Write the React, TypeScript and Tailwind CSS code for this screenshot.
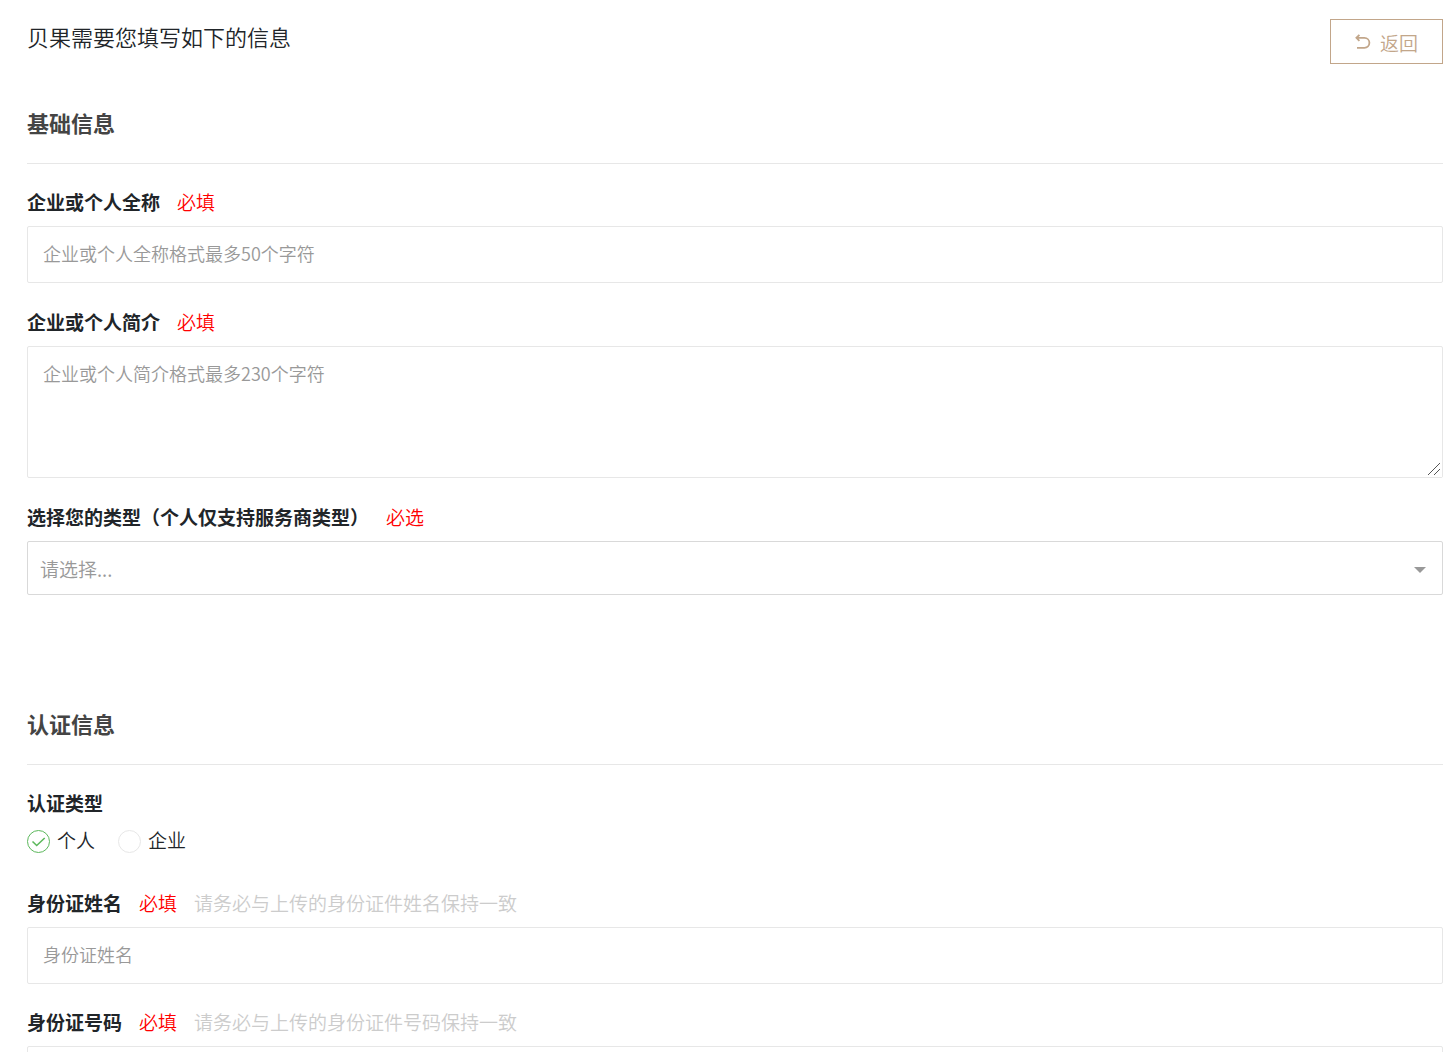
import React, { useState } from 'react';

interface FieldLabelProps {
  htmlFor: string;
  text: string;
  required?: string;
  hint?: string;
}

const inputClass =
  'block w-full rounded-xs border border-[#e7e7e7] bg-white px-[15px] text-[18px] leading-[27px] text-[#212529] placeholder:text-[#999] focus:outline-none focus:border-[#c2a68a]';

const FieldLabel: React.FC<FieldLabelProps> = ({ htmlFor, text, required, hint }) => (
  <div className="mb-3 flex items-center gap-[17px] text-[19px] leading-6">
    <label htmlFor={htmlFor} className="font-bold">{text}</label>
    {required && <span className="text-[#ff0000]">{required}</span>}
    {hint && <span className="text-[#ccc]">{hint}</span>}
  </div>
);

const SectionTitle: React.FC<{ children: React.ReactNode }> = ({ children }) => (
  <h2 className="mb-[26px] border-b border-[#e7e7e7] pb-[26px] text-[22px] leading-[30px] font-bold text-[#444]">
    {children}
  </h2>
);

const BackIcon: React.FC = () => (
  <svg className="h-4 w-4" viewBox="0 0 16 16" fill="none" stroke="currentColor" strokeWidth="1.8" aria-hidden="true">
    <path d="M4.4 0.8 1.4 3.8l3 3M1.4 3.8h8a5 5 0 0 1 0 10H2" />
  </svg>
);

const RadioOption: React.FC<{ value: string; label: string; checked: boolean; onChange: (value: string) => void }> = ({
  value,
  label,
  checked,
  onChange
}) => (
  <label className="flex cursor-pointer items-center gap-[7px]">
    <span className="relative flex h-[23px] w-[23px]">
      <input
        type="radio"
        name="authType"
        value={value}
        checked={checked}
        onChange={() => onChange(value)}
        className="h-full w-full appearance-none rounded-full border border-[#e7e7e7] checked:border-[#5cb85c]"
      />
      {checked && (
        <svg className="pointer-events-none absolute inset-0 h-full w-full text-[#5cb85c]" viewBox="0 0 23 23" fill="none" stroke="currentColor" strokeWidth="1.6" aria-hidden="true">
          <path d="m5.5 11.5 4.2 4 8-7.5" />
        </svg>
      )}
    </span>
    <span className="pb-0.5">{label}</span>
  </label>
);

const App: React.FC = () => {
  const [authType, setAuthType] = useState('personal');
  const [companyType, setCompanyType] = useState('');

  return (
    <div className="bg-white pt-[19px] pr-[13px] pb-8 pl-[27px] font-['Noto_Sans_CJK_SC',sans-serif] text-[#212529]">
      <header className="mb-[43px] flex items-start justify-between">
        <h1 className="text-[22px] leading-[34px] font-[350]">贝果需要您填写如下的信息</h1>
        <button type="button" className="flex h-[45px] items-center gap-[9px] border border-[#c2a68a] px-6 text-[19px] font-[350] text-[#c2a68a]">
          <BackIcon />
          <span className="pt-1">返回</span>
        </button>
      </header>

      <form className="font-[350]" onSubmit={(e) => e.preventDefault()}>
        {/* Basic info */}
        <section className="mb-[113px]">
          <SectionTitle>基础信息</SectionTitle>
          <div className="space-y-[27px]">
            <div>
              <FieldLabel htmlFor="fullName" text="企业或个人全称" required="必填" />
              <input id="fullName" type="text" maxLength={50} placeholder="企业或个人全称格式最多50个字符" className={`${inputClass} h-[57px] pb-1`} />
            </div>
            <div>
              <FieldLabel htmlFor="intro" text="企业或个人简介" required="必填" />
              <div className="relative">
                <textarea id="intro" maxLength={230} placeholder="企业或个人简介格式最多230个字符" className={`${inputClass} h-[132px] resize-y py-[13px]`} />
                <svg className="pointer-events-none absolute right-px bottom-px h-[15px] w-[15px] bg-white text-[#555]" viewBox="0 0 15 15" fill="none" stroke="currentColor" aria-hidden="true">
                  <path d="M1 13 13 1M7 13l6-6" />
                </svg>
              </div>
            </div>
            <div>
              <FieldLabel htmlFor="companyType" text="选择您的类型（个人仅支持服务商类型）" required="必选" />
              <div className="relative">
                <select
                  id="companyType"
                  value={companyType}
                  onChange={(e) => setCompanyType(e.target.value)}
                  className="block h-[54px] w-full appearance-none rounded-xs border border-[#d9d9d9] bg-white px-3 pt-0.5 text-[19px] text-[#999]"
                >
                  <option value="">请选择...</option>
                  <option value="service">服务商</option>
                </select>
                <svg className="pointer-events-none absolute top-[26px] right-[17px] h-1.5 w-3 text-[#999]" viewBox="0 0 12 6" fill="currentColor" aria-hidden="true">
                  <path d="M0 0h12L6 6z" />
                </svg>
              </div>
            </div>
          </div>
        </section>

        {/* Verification info */}
        <section>
          <SectionTitle>认证信息</SectionTitle>
          <fieldset className="mb-[35px] text-[19px] leading-7">
            <legend className="mb-[11px] leading-6 font-bold">认证类型</legend>
            <div className="flex gap-[23px]">
              <RadioOption value="personal" label="个人" checked={authType === 'personal'} onChange={setAuthType} />
              <RadioOption value="company" label="企业" checked={authType === 'company'} onChange={setAuthType} />
            </div>
          </fieldset>
          <div className="space-y-[26px]">
            <div>
              <FieldLabel htmlFor="idName" text="身份证姓名" required="必填" hint="请务必与上传的身份证件姓名保持一致" />
              <input id="idName" type="text" placeholder="身份证姓名" className={`${inputClass} h-[57px] pb-1`} />
            </div>
            <div>
              <FieldLabel htmlFor="idNumber" text="身份证号码" required="必填" hint="请务必与上传的身份证件号码保持一致" />
              <input id="idNumber" type="text" placeholder="身份证号码" className={`${inputClass} h-[57px] pb-1`} />
            </div>
          </div>
        </section>
      </form>
    </div>
  );
};

export default App;
